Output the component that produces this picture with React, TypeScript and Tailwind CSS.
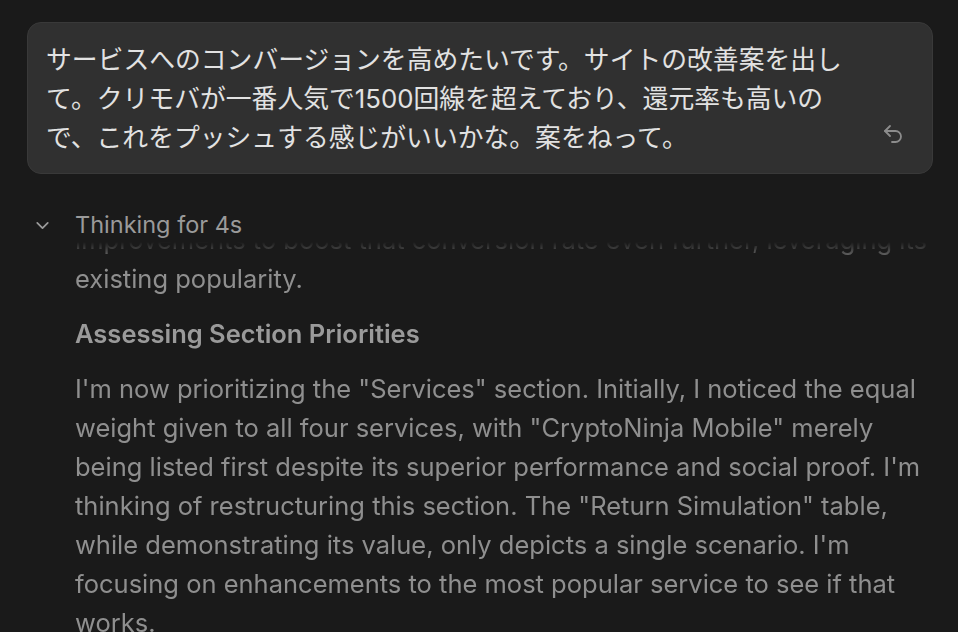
import { ChevronDown, Undo2 } from "lucide-react";

const FONT = "font-['Inter','Noto_Sans_CJK_JP',sans-serif]";

const USER_LINES = [
  "サービスへのコンバージョンを高めたいです。サイトの改善案を出し",
  "て。クリモバが一番人気で1500回線を超えており、還元率も高いの",
  "で、これをプッシュする感じがいいかな。案をねって。",
];

const INTRO_LINES = [
  "improvements to boost that conversion rate even further, leveraging its",
  "existing popularity.",
];

const BODY_LINES = [
  'I\'m now prioritizing the "Services" section. Initially, I noticed the equal',
  'weight given to all four services, with "CryptoNinja Mobile" merely',
  "being listed first despite its superior performance and social proof. I'm",
  'thinking of restructuring this section. The "Return Simulation" table,',
  "while demonstrating its value, only depicts a single scenario. I'm",
  "focusing on enhancements to the most popular service to see if that",
  "works.",
];

function Lines({ lines }: { lines: string[] }) {
  return (
    <>
      {lines.map((line) => (
        <span key={line} className="block whitespace-nowrap">
          {line}
        </span>
      ))}
    </>
  );
}

function UserMessage() {
  return (
    <div className="relative rounded-[14px] border border-[#393939] bg-[#303030] pb-[16px] pl-[18px] pr-[60px] pt-[17px]">
      <p className="text-[25.8px] leading-[39px] text-[#e2e2e2]">
        <Lines lines={USER_LINES} />
      </p>
      <button
        aria-label="Edit"
        className="absolute bottom-[27px] right-[27px] text-[#8c8c8c]"
      >
        <Undo2 size={24} strokeWidth={1.8} />
      </button>
    </div>
  );
}

function ThinkingBlock() {
  return (
    <div className="flex min-h-0 flex-1 flex-col">
      <div className="-mt-[1px] flex h-[30px] items-center">
        <ChevronDown size={21} strokeWidth={2} className="ml-[5px] text-[#9a9a9a]" />
        <span className="ml-[22px] text-[23.5px] text-[#9a9a9a]">Thinking for 4s</span>
      </div>
      <div className="mt-[2px] min-h-0 flex-1 overflow-hidden pl-[48px] [mask-image:linear-gradient(to_bottom,transparent,black_22px)]">
        <div className="-mt-[22px] flex flex-col gap-4 text-[25.5px] leading-[39px] text-[#8f8f8f]">
          <p>
            <Lines lines={INTRO_LINES} />
          </p>
          <p className="font-semibold text-[#9a9a9a]">Assessing Section Priorities</p>
          <p>
            <Lines lines={BODY_LINES} />
          </p>
        </div>
      </div>
    </div>
  );
}

export default function App() {
  return (
    <div
      className={`${FONT} flex h-[632px] w-[958px] flex-col overflow-hidden bg-[#1a1a1a] pl-[27px] pr-[25px] pt-[22px] antialiased`}
    >
      <UserMessage />
      <div className="mt-[37px] flex min-h-0 flex-1 flex-col">
        <ThinkingBlock />
      </div>
    </div>
  );
}
